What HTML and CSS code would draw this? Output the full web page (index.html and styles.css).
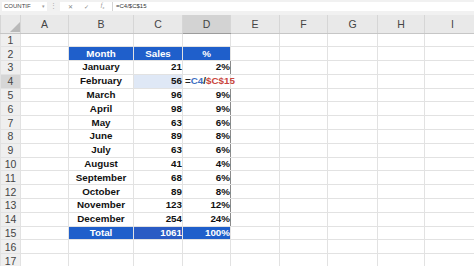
FILE: index.html
```html
<!DOCTYPE html>
<html lang="en">
<head>
<meta charset="UTF-8">
<meta name="viewport" content="width=device-width, initial-scale=1.0">
<title>Sales Percentages</title>
<link rel="stylesheet" href="styles.css">
</head>
<body>
<div class="formula-bar">
    <div class="name-box">COUNTIF<span class="caret">&#9662;</span></div>
    <div class="grip">&#8942;</div>
    <div class="fx-buttons">
        <span>&#10005;</span>
        <span>&#10003;</span>
        <span class="fx">f<sub>x</sub></span>
    </div>
    <div class="formula-input">=C4/$C$15</div>
</div>
<table class="sheet">
    <colgroup>
        <col class="w-rn"><col class="w-a"><col class="w-b"><col class="w-c"><col class="w-d">
        <col class="w-e"><col class="w-f"><col class="w-g"><col class="w-h"><col class="w-i">
    </colgroup>
    <tr class="col-heads">
        <th class="corner"><svg width="10" height="10" viewBox="0 0 10 10"><polygon points="10,0 10,10 0,10" fill="#b9b9b9"/></svg></th>
        <th>A</th><th>B</th><th>C</th><th class="sel">D</th><th>E</th><th>F</th><th>G</th><th>H</th><th>I</th>
    </tr>
    <tr><th class="rn">1</th><td></td><td></td><td></td><td></td><td></td><td></td><td></td><td></td><td></td></tr>
    <tr><th class="rn">2</th><td></td><td class="hd">Month</td><td class="hd">Sales</td><td class="hd">%</td><td></td><td></td><td></td><td></td><td></td></tr>
    <tr><th class="rn">3</th><td></td><td class="tb mo">January</td><td class="tb num">21</td><td class="tb num last">2%</td><td></td><td></td><td></td><td></td><td></td></tr>
    <tr><th class="rn sel">4</th><td></td><td class="tb mo">February</td><td class="tb num ref-blue">56</td><td class="tb edit"><span class="formula">=<span class="f-blue">C4</span>/<span class="f-red">$C$15</span></span></td><td class="spill"></td><td></td><td></td><td></td><td></td></tr>
    <tr><th class="rn">5</th><td></td><td class="tb mo">March</td><td class="tb num">96</td><td class="tb num last">9%</td><td></td><td></td><td></td><td></td><td></td></tr>
    <tr><th class="rn">6</th><td></td><td class="tb mo">April</td><td class="tb num">98</td><td class="tb num last">9%</td><td></td><td></td><td></td><td></td><td></td></tr>
    <tr><th class="rn">7</th><td></td><td class="tb mo">May</td><td class="tb num">63</td><td class="tb num last">6%</td><td></td><td></td><td></td><td></td><td></td></tr>
    <tr><th class="rn">8</th><td></td><td class="tb mo">June</td><td class="tb num">89</td><td class="tb num last">8%</td><td></td><td></td><td></td><td></td><td></td></tr>
    <tr><th class="rn">9</th><td></td><td class="tb mo">July</td><td class="tb num">63</td><td class="tb num last">6%</td><td></td><td></td><td></td><td></td><td></td></tr>
    <tr><th class="rn">10</th><td></td><td class="tb mo">August</td><td class="tb num">41</td><td class="tb num last">4%</td><td></td><td></td><td></td><td></td><td></td></tr>
    <tr><th class="rn">11</th><td></td><td class="tb mo">September</td><td class="tb num">68</td><td class="tb num last">6%</td><td></td><td></td><td></td><td></td><td></td></tr>
    <tr><th class="rn">12</th><td></td><td class="tb mo">October</td><td class="tb num">89</td><td class="tb num last">8%</td><td></td><td></td><td></td><td></td><td></td></tr>
    <tr><th class="rn">13</th><td></td><td class="tb mo">November</td><td class="tb num">123</td><td class="tb num last">12%</td><td></td><td></td><td></td><td></td><td></td></tr>
    <tr><th class="rn">14</th><td></td><td class="tb mo">December</td><td class="tb num">254</td><td class="tb num last">24%</td><td></td><td></td><td></td><td></td><td></td></tr>
    <tr><th class="rn">15</th><td></td><td class="tot mo">Total</td><td class="tot num ref-red">1061</td><td class="tot num">100%</td><td></td><td></td><td></td><td></td><td></td></tr>
    <tr><th class="rn">16</th><td></td><td></td><td></td><td></td><td></td><td></td><td></td><td></td><td></td></tr>
    <tr><th class="rn">17</th><td></td><td></td><td></td><td></td><td></td><td></td><td></td><td></td><td></td></tr>
</table>
</body>
</html>
```
FILE: styles.css
```css
body {
    margin: 0;
    width: 474px;
    height: 266px;
    overflow: hidden;
    background-color: #fff;
    font-family: "Liberation Sans", Arial, sans-serif;
}
.formula-bar {
    display: flex;
    align-items: center;
    height: 15px;
    padding: 0 0 3px 2px;
    box-sizing: border-box;
    background-color: #f1f1f1;
    font-size: 6px;
    color: #444;
}
.name-box {
    width: 45px;
    height: 9px;
    box-sizing: border-box;
    padding: 0 2px;
    display: flex;
    align-items: center;
    justify-content: space-between;
    background-color: #fff;
}
.caret {
    color: #999;
    font-size: 5px;
}
.grip {
    width: 13px;
    text-align: center;
    color: #aaa;
    font-size: 7px;
}
.fx-buttons {
    width: 53px;
    height: 9px;
    display: flex;
    align-items: center;
    justify-content: space-around;
    padding: 0 2px;
    box-sizing: border-box;
    background-color: #fff;
    border-right: 1px solid #d4d4d4;
    color: #888;
    font-size: 6px;
}
.fx {
    font-family: "Liberation Serif", serif;
    font-style: italic;
}
.fx sub {
    font-size: 4px;
}
.formula-input {
    flex: 1;
    height: 9px;
    line-height: 9px;
    padding-left: 3px;
    background-color: #fff;
    color: #333;
}
.sheet {
    table-layout: fixed;
    border-collapse: collapse;
    width: 480px;
    font-size: 9.8px;
}
.w-rn { width: 20px; }
.w-a { width: 48px; }
.w-b { width: 65px; }
.w-c { width: 49px; }
.w-d { width: 48px; }
.w-e { width: 49px; }
.w-f { width: 48px; }
.w-g { width: 50px; }
.w-h { width: 47px; }
.w-i { width: 56px; }
.sheet tr {
    height: 13.8px;
}
.sheet td, .sheet th {
    padding: 0;
    border: 1px solid #e2e2e2;
    white-space: nowrap;
    line-height: 12px;
}
.sheet .col-heads {
    height: 18px;
}
.col-heads th {
    background-color: #e9e9e9;
    border-color: #d6d6d6;
    border-top: none;
    border-bottom: 1px solid #c6c6c6;
    font-weight: normal;
    font-size: 10.5px;
    color: #444;
}
.col-heads th.sel {
    background-color: #d3d3d3;
    border-bottom: 1px solid #9c9c9c;
}
.corner {
    text-align: right;
    vertical-align: bottom;
    border-left: none;
}
.corner svg {
    display: block;
    margin: 0 0 1px auto;
}
.rn {
    background-color: #efefef;
    border-color: #dadada;
    border-left: none;
    border-right: 1px solid #c6c6c6;
    font-weight: normal;
    font-size: 10.5px;
    color: #444;
}
.rn.sel {
    background-color: #d6d6d6;
}
.hd {
    background-color: #1f5fcb;
    border: 1px solid #1f5fcb;
    color: #fff;
    font-weight: bold;
    text-align: center;
}
.tb {
    border: 1px solid #b2b2b2;
    font-weight: bold;
    color: #111;
}
.tb.last {
    border-right-color: #8a8a8a;
}
.mo {
    text-align: center;
}
.num {
    text-align: right;
    padding-right: 2px;
}
.ref-blue {
    background-color: #dfe8f6;
    border: 1px solid #8eaedf;
}
.edit {
    border-right-color: #fff;
    overflow: visible;
}
.formula {
    padding-left: 2px;
    color: #222;
}
.f-blue {
    color: #3f6fc2;
}
.f-red {
    color: #c9463d;
}
.spill {
    border-left-color: #fff;
}
.tot {
    background-color: #1f5fcb;
    border: 1px solid #1f5fcb;
    border-right-color: #6f93d8;
    color: #fff;
    font-weight: bold;
}
.ref-red {
    background-color: #2a5bc4;
    border: 1px solid #e07a7a;
}
```
